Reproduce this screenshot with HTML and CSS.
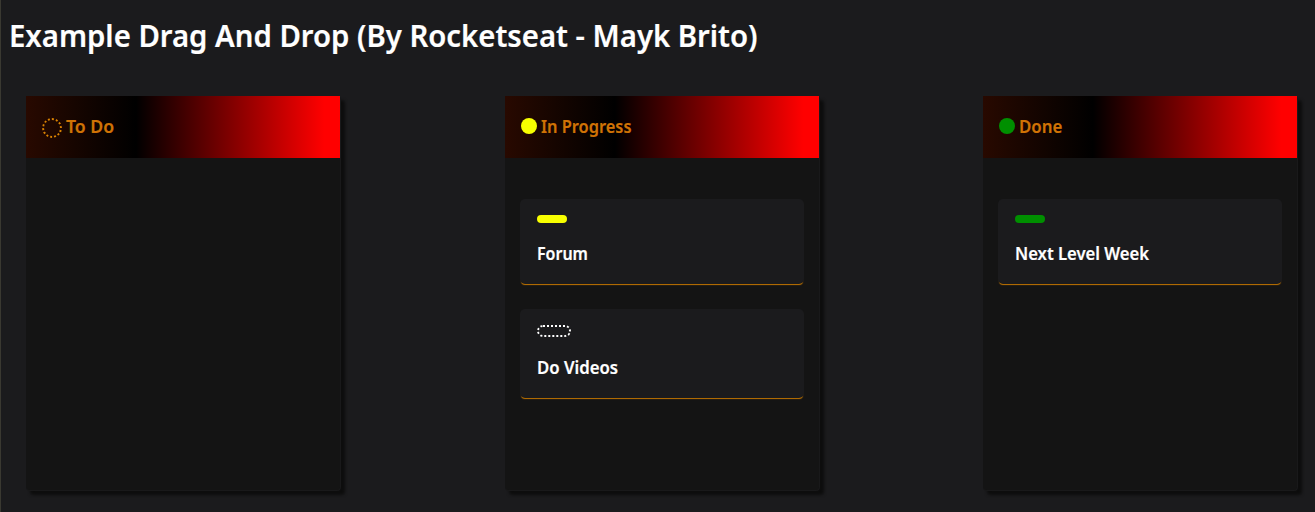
FILE: index.html
```html
<!DOCTYPE html>
<html lang="en">
<head>
<meta charset="utf-8">
<title>Example Drag And Drop</title>
<link rel="stylesheet" href="styles.css">
</head>
<body>
<h1 class="title"><span class="label w-title">Example Drag And Drop (By Rocketseat - Mayk Brito)</span></h1>
<main class="boards">
  <section class="board">
    <h3 class="board-head"><i class="dot dotted"></i><span class="label w-todo">To Do</span></h3>
    <div class="dropzone"></div>
  </section>
  <section class="board">
    <h3 class="board-head"><i class="dot yellow"></i><span class="label w-progress">In Progress</span></h3>
    <div class="dropzone">
      <article class="card"><div class="status yellow"></div><div class="content"><span class="label w-forum">Forum</span></div></article>
      <article class="card"><div class="status dotted"></div><div class="content"><span class="label w-videos">Do Videos</span></div></article>
    </div>
  </section>
  <section class="board">
    <h3 class="board-head"><i class="dot green"></i><span class="label w-done">Done</span></h3>
    <div class="dropzone">
      <article class="card"><div class="status green"></div><div class="content"><span class="label w-week">Next Level Week</span></div></article>
    </div>
  </section>
</main>
</body>
</html>
```
FILE: styles.css
```css
* { box-sizing: border-box; margin: 0; padding: 0; }
body {
  height: 512px;
  overflow: hidden;
  background: #1b1b1d;
  color: #fff;
  font-family: "Noto Sans", sans-serif;
  border-left: 1px solid #3a3931;
}
.label { display: inline-block; transform-origin: left center; white-space: nowrap; -webkit-text-stroke: .2px currentColor; }
.w-title { transform: scaleX(.945); -webkit-text-stroke-width: .2px; }
.w-todo { transform: scaleX(.98); }
.w-progress { transform: scaleX(.91); }
.w-done { transform: scaleX(.935); }
.w-forum { transform: scaleX(.94); }
.w-videos { transform: scaleX(.985); }
.w-week { transform: scaleX(.978); }
.title { height: 96px; padding: 11px 0 0 8px; font-size: 31px; line-height: 48px; font-weight: 600; }
.boards { display: flex; justify-content: space-between; padding: 0 17px 0 25px; }
.board {
  width: 315px; height: 395px; background: #141414;
  border: solid #19191a; border-width: 0 1px 1px 0;
  border-radius: 4px; box-shadow: 4px 4px 3px #0d0d0d;
}
.board-head {
  display: flex; align-items: center; gap: 4px; width: 314px; height: 62px; padding: 0 16px;
  background: linear-gradient(90deg, #280900 0%, #000 35%, #f00 95%);
  color: #d07305; font-size: 18px; line-height: 24px; font-weight: 600;
}
.board-head .label { margin-bottom: 2px; }
.dot { width: 16px; height: 16px; border-radius: 50%; margin-bottom: 2px; }
.dot.dotted { width: 20px; height: 20px; border: 2px dotted #d98200; margin: 2px 0 0; }
.yellow { background: #f8ff00; }
.green { background: #008f00; }
.dropzone { display: flex; flex-direction: column; gap: 25px; padding: 41px 15px 0; }
.card { width: 284px; padding: 16px 17px 0; height: 85px; border-radius: 5px; background: #1b1b1d; box-shadow: 0 2px 1px -1px #c07400; }
.card:nth-child(2) { height: 89px; }
.status { width: 30px; height: 8px; border-radius: 4px; }
.status.dotted { width: 34px; height: 12px; border: 2px dotted #fff; border-radius: 6px; }
.content { margin-top: 17px; font-size: 17px; line-height: 28px; font-weight: 600; }
```
